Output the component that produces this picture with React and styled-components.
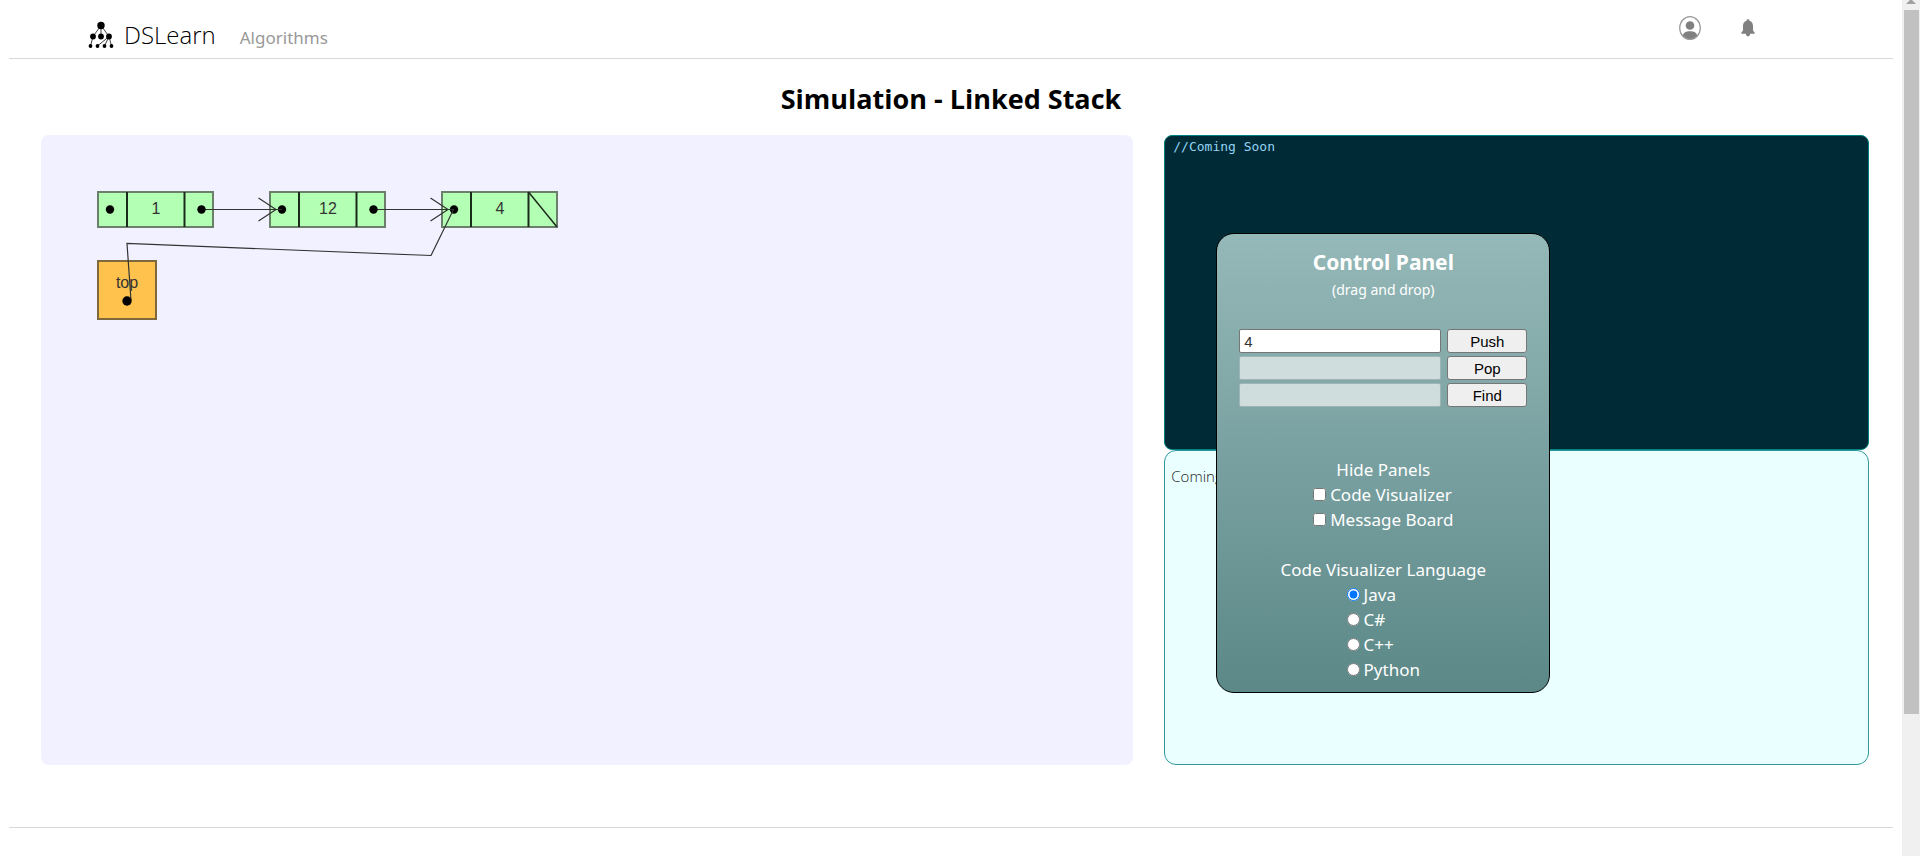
import React, { useState } from "react";
import styled, { createGlobalStyle } from "styled-components";

const GlobalStyle = createGlobalStyle`
  * { box-sizing: border-box; }
  body {
    margin: 0;
    background: #fff;
    color: #000;
    font-family: "Noto Sans", "Open Sans", sans-serif;
  }
`;

const Shell = styled.div`
  display: flex;
  min-height: 100vh;
`;

const Page = styled.div`
  flex: 1;
  min-width: 0;
  padding: 0 9px;
`;

const Header = styled.header`
  display: flex;
  align-items: flex-start;
  justify-content: space-between;
  height: 59px;
  padding: 0 138px 0 79px;
  border-bottom: 1px solid #d8d8d8;
`;

const Nav = styled.nav`
  display: flex;
  align-items: flex-start;
  padding-top: 19px;
`;

const Brand = styled.a`
  display: flex;
  align-items: center;
  gap: 10px;
  color: #000;
  font-family: "Open Sans", sans-serif;
  font-size: 24px;
  font-weight: 300;
  line-height: 32px;
  text-decoration: none;
`;

const NavLink = styled.a`
  margin-left: 24px;
  padding-top: 3px;
  color: #999;
  font-size: 17px;
  line-height: 32px;
  text-decoration: none;
`;

const Actions = styled.div`
  display: flex;
  align-items: center;
  gap: 40px;
  padding-top: 16px;
`;

const IconButton = styled.button`
  display: flex;
  padding: 0;
  border: 0;
  background: none;
`;

const Title = styled.h1`
  margin: 20px 0 16px;
  font-family: "Open Sans", sans-serif;
  font-size: 27px;
  font-weight: 700;
  line-height: 40px;
  text-align: center;
`;

const Workspace = styled.main`
  display: grid;
  grid-template-columns: 31fr 20fr;
  gap: 31px;
  min-height: 630px;
  margin: 0 24px 62px 32px;
`;

const Canvas = styled.section`
  border-radius: 8px;
  background: #f1f1ff;
  overflow: hidden;
`;

const Side = styled.div`
  position: relative;
  display: grid;
  grid-template-rows: 1fr 1fr;
`;

const CodeBoard = styled.pre`
  margin: 0;
  padding: 0 8px;
  border: 1px solid #008080;
  border-radius: 8px;
  background: #002b36;
  color: #93d3f5;
  font-family: "DejaVu Sans Mono", monospace;
  font-size: 13px;
  line-height: 22px;
`;

const MessageBoard = styled.section`
  padding: 14px 6px;
  border: 1px solid #2f9999;
  border-radius: 12px;
  background: #eaffff;
  color: #222;
  font-family: "Open Sans", sans-serif;
  font-size: 15px;
  font-weight: 300;
  line-height: 22px;
`;

const ControlPanel = styled.form`
  position: absolute;
  top: 98px;
  left: 52px;
  display: flex;
  flex-direction: column;
  align-items: center;
  width: 334px;
  padding: 14px 22px 10px;
  border: 1px solid #000;
  border-radius: 18px;
  background: linear-gradient(#95b8b8, #5c8888);
  color: #fff;
  font-size: 17px;
  line-height: 25px;
`;

const PanelTitle = styled.h2`
  margin: 0;
  font-size: 21px;
  font-weight: 700;
  line-height: 28px;
`;

const Hint = styled.p`
  margin: 0 0 25px;
  font-size: 14px;
  line-height: 28px;
`;

const Operations = styled.div`
  display: grid;
  grid-template-columns: 1fr 80px;
  gap: 3px 6px;
  width: 100%;
  margin-bottom: 50px;
`;

const Field = styled.input`
  min-width: 0;
  height: 24px;
  padding: 0 4px;
  border: 1px solid #767676;
  border-radius: 2px;
  background: #fff;
  color: #333;
  font-family: "Liberation Sans", Arial, sans-serif;
  font-size: 15px;
  &:disabled {
    border-color: #9fb4b4;
    background: #cfdddd;
  }
`;

const ActionButton = styled.button`
  height: 24px;
  padding: 0;
  border: 1px solid #767676;
  border-radius: 3px;
  background: #efefef;
  color: #000;
  font-family: "Liberation Sans", Arial, sans-serif;
  font-size: 15px;
`;

const OptionGroup = styled.fieldset`
  display: flex;
  flex-direction: column;
  align-items: center;
  margin: 0 0 ${(p) => (p.$last ? "0" : "25px")};
  padding: 0;
  border: 0;
`;

const GroupLabel = styled.legend`
  padding: 0;
  text-align: center;
  margin: 0 auto;
`;

const OptionList = styled.div`
  display: flex;
  flex-direction: column;
`;

const Option = styled.label`
  display: flex;
  align-items: center;
  gap: 4px;
`;

const Toggle = styled.input`
  width: 13px;
  height: 13px;
  margin: 0;
`;

const Footer = styled.footer`
  border-top: 1px solid #d8d8d8;
`;

const ScrollTrack = styled.div`
  display: flex;
  flex-direction: column;
  align-items: center;
  flex: none;
  width: 18px;
  background: #f0f0f0;
`;

const ScrollArrow = styled.svg`
  display: block;
  flex: none;
  margin-bottom: 6px;
`;

const ScrollThumb = styled.div`
  width: 15px;
  height: 704px;
  background: #c1c1c1;
`;

const TreeLogo = () => (
  <svg width="26" height="28" viewBox="0 0 26 28" aria-hidden="true">
    <g stroke="#444" strokeWidth="1">
      <path d="M13 4.500 5 15.500M13 4.500V15.500M13 4.500l8 11M5 15.500 2.500 25M21 15.500 9.500 25M21 15.500 16.500 25M21 15.500 23.500 25" fill="none" />
    </g>
    <circle cx="13" cy="4.500" r="3.700" />
    <circle cx="5" cy="15.500" r="2.900" />
    <circle cx="13" cy="15.500" r="2.900" />
    <circle cx="21" cy="15.500" r="2.900" />
    <circle cx="2.500" cy="25" r="1.900" />
    <circle cx="9.500" cy="25" r="1.900" />
    <circle cx="16.500" cy="25" r="1.900" />
    <circle cx="23.500" cy="25" r="1.900" />
  </svg>
);

const UserIcon = () => (
  <svg width="22" height="24" viewBox="0 0 22 24" aria-hidden="true">
    <defs>
      <clipPath id="avatar"><ellipse cx="11" cy="12" rx="10.500" ry="11.500" /></clipPath>
    </defs>
    <g clipPath="url(#avatar)" fill="#808080">
      <circle cx="11" cy="9.500" r="4.300" />
      <path d="M3.500 24V20C4.500 16.500 7 15.300 11 15.300s6.500 1.200 7.500 4.700V24z" />
    </g>
    <ellipse cx="11" cy="12" rx="10.300" ry="11.300" fill="none" stroke="#999" strokeWidth="1.200" />
  </svg>
);

const BellIcon = () => (
  <svg width="14" height="18" viewBox="0 0 14 18" aria-hidden="true">
    <path fill="#808080" d="M5.600 1.800V.8Q5.600.2 7 .2t1.400.6v1C11 2.500 12 4.500 12 7v4.500l1.700 2.300v1H9.200Q9 17.400 7 17.400T4.800 14.800H.3v-1L2 11.500V7c0-2.500 1-4.500 3.600-5.200z" />
  </svg>
);

const NODES = [
  { x: 57, value: "1" },
  { x: 229, value: "12" },
  { x: 401, value: "4", last: true },
];

const ListNode = ({ x, value, last }) => (
  <g transform={`translate(${x} 57)`}>
    <rect width="115" height="35" fill="#b3ffb3" stroke="#6b7f6b" strokeWidth="2" />
    <path d="M29 0V35M86.500 0V35" stroke="#1c2a1c" strokeWidth="2" />
    <text x="58" y="22" textAnchor="middle">{value}</text>
    <circle cx="12" cy="17.500" r="4.200" fill="#000" />
    {last ? (
      <path d="M86.500 0 115 35" stroke="#1c2a1c" strokeWidth="1.500" />
    ) : (
      <>
        <path d="M103.500 17.500H184M160.500 6 178 17.500 160.500 29" fill="none" stroke="#333" strokeWidth="1.200" />
        <circle cx="103.500" cy="17.500" r="4.200" fill="#000" />
      </>
    )}
  </g>
);

const StackDiagram = () => (
  <svg
    width="560"
    height="240"
    role="img"
    aria-label="Linked stack"
    fontFamily="'Liberation Sans', Arial, sans-serif"
    fontSize="16"
    fill="#333"
  >
    <rect x="57" y="126" width="58" height="58" fill="#ffc34d" stroke="#7f693c" strokeWidth="2" />
    <text x="86" y="153" textAnchor="middle">top</text>
    {[...NODES].reverse().map((n) => (
      <ListNode key={n.x} {...n} />
    ))}
    <path d="M412.500 74.500 390 120.500 86 108.500 90 165.500" fill="none" stroke="#333" strokeWidth="1.200" />
    <circle cx="86" cy="166" r="4.700" fill="#000" />
  </svg>
);

export default function App() {
  const [value, setValue] = useState("4");
  const [language, setLanguage] = useState("Java");

  return (
    <>
      <GlobalStyle />
      <Shell>
        <Page>
          <Header>
            <Nav>
              <Brand href="#"><TreeLogo />DSLearn</Brand>
              <NavLink href="#algorithms">Algorithms</NavLink>
            </Nav>
            <Actions>
              <IconButton type="button" aria-label="Account"><UserIcon /></IconButton>
              <IconButton type="button" aria-label="Notifications"><BellIcon /></IconButton>
            </Actions>
          </Header>
          <Title>Simulation - Linked Stack</Title>
          <Workspace>
            <Canvas><StackDiagram /></Canvas>
            <Side>
              <CodeBoard>//Coming Soon</CodeBoard>
              <MessageBoard>Coming</MessageBoard>
              <ControlPanel onSubmit={(e) => e.preventDefault()}>
                <PanelTitle>Control Panel</PanelTitle>
                <Hint>(drag and drop)</Hint>
                <Operations>
                  <Field aria-label="Push value" value={value} onChange={(e) => setValue(e.target.value)} />
                  <ActionButton type="button">Push</ActionButton>
                  <Field aria-label="Pop value" disabled />
                  <ActionButton type="button">Pop</ActionButton>
                  <Field aria-label="Find value" disabled />
                  <ActionButton type="button">Find</ActionButton>
                </Operations>
                <OptionGroup>
                  <GroupLabel>Hide Panels</GroupLabel>
                  <OptionList>
                    {["Code Visualizer", "Message Board"].map((name) => (
                      <Option key={name}><Toggle type="checkbox" />{name}</Option>
                    ))}
                  </OptionList>
                </OptionGroup>
                <OptionGroup $last>
                  <GroupLabel>Code Visualizer Language</GroupLabel>
                  <OptionList>
                    {["Java", "C#", "C++", "Python"].map((name) => (
                      <Option key={name}>
                        <Toggle
                          type="radio"
                          name="language"
                          checked={language === name}
                          onChange={() => setLanguage(name)}
                        />
                        {name}
                      </Option>
                    ))}
                  </OptionList>
                </OptionGroup>
              </ControlPanel>
            </Side>
          </Workspace>
          <Footer />
        </Page>
        <ScrollTrack aria-hidden="true">
          <ScrollArrow width="10" height="4" viewBox="0 0 10 4">
            <path d="M4 0h2l4 4H0z" fill="#a0a0a0" />
          </ScrollArrow>
          <ScrollThumb />
        </ScrollTrack>
      </Shell>
    </>
  );
}
